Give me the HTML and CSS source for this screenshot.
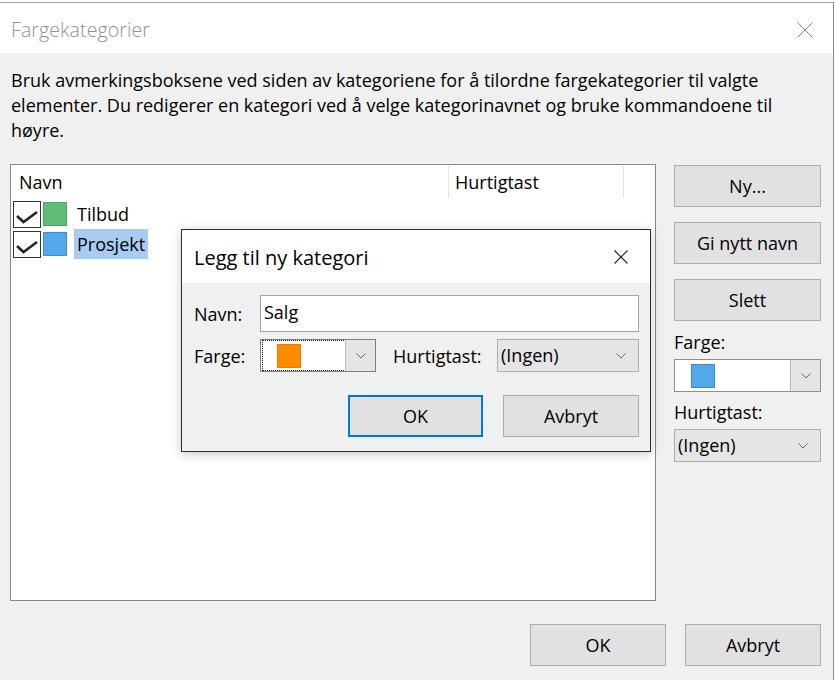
FILE: index.html
```html
<!DOCTYPE html>
<html lang="no">
<head>
<meta charset="utf-8">
<title>Fargekategorier</title>
<link rel="stylesheet" href="styles.css">
</head>
<body>
<div class="screen">
  <div class="dialog">
    <div class="titlebar">
      <span class="title">Fargekategorier</span>
      <svg class="close" width="16" height="16" viewBox="0 0 16 16"><path d="M0.5 0.5 L15.5 15.5 M15.5 0.5 L0.5 15.5" stroke="#8a8a8a" stroke-width="1" fill="none"/></svg>
    </div>
    <div class="content">
      <p class="desc">Bruk avmerkingsboksene ved siden av kategoriene for å tilordne fargekategorier til valgte<br>elementer. Du redigerer en kategori ved å velge kategorinavnet og bruke kommandoene til<br>høyre.</p>
      <div class="main">
        <div class="list">
          <div class="list-head">
            <span class="col-name">Navn</span>
            <span class="sep"></span>
            <span class="col-key">Hurtigtast</span>
            <span class="sep"></span>
          </div>
          <div class="row">
            <span class="check"><svg width="25" height="25" viewBox="0 0 25 25"><path d="M3 14 L9.5 20 L23 10" stroke="#262626" stroke-width="2.6" fill="none" stroke-linejoin="miter"/></svg></span>
            <span class="swatch green"></span>
            <span class="label">Tilbud</span>
          </div>
          <div class="row">
            <span class="check"><svg width="25" height="25" viewBox="0 0 25 25"><path d="M3 14 L9.5 20 L23 10" stroke="#262626" stroke-width="2.6" fill="none" stroke-linejoin="miter"/></svg></span>
            <span class="swatch blue"></span>
            <span class="label selected">Prosjekt</span>
          </div>
        </div>
        <div class="side">
          <div class="btn">Ny...</div>
          <div class="btn">Gi nytt navn</div>
          <div class="btn">Slett</div>
          <div class="side-label">Farge:</div>
          <div class="combo white">
            <span class="combo-value"><span class="swatch blue"></span></span>
            <span class="combo-arrow"><svg width="10" height="6" viewBox="0 0 10 6"><path d="M0.5 0.5 L5 5 L9.5 0.5" stroke="#666" stroke-width="1" fill="none"/></svg></span>
          </div>
          <div class="side-label second">Hurtigtast:</div>
          <div class="combo gray">
            <span class="combo-text">(Ingen)</span>
            <svg class="chev" width="10" height="6" viewBox="0 0 10 6"><path d="M0.5 0.5 L5 5 L9.5 0.5" stroke="#666" stroke-width="1" fill="none"/></svg>
          </div>
        </div>
      </div>
      <div class="footer">
        <div class="btn wide">OK</div>
        <div class="btn wide">Avbryt</div>
      </div>
    </div>
  </div>

  <div class="subdialog">
    <div class="sub-titlebar">
      <span class="sub-title">Legg til ny kategori</span>
      <svg class="sub-close" width="14" height="14" viewBox="0 0 14 14"><path d="M0.5 0.5 L13.5 13.5 M13.5 0.5 L0.5 13.5" stroke="#222" stroke-width="1.1" fill="none"/></svg>
    </div>
    <div class="sub-body">
      <div class="sub-row">
        <span class="sub-label">Navn:</span>
        <div class="input">Salg</div>
      </div>
      <div class="sub-row second">
        <span class="sub-label">Farge:</span>
        <div class="combo white small">
          <span class="combo-value focus"><span class="swatch orange"></span></span>
          <span class="combo-arrow"><svg width="10" height="6" viewBox="0 0 10 6"><path d="M0.5 0.5 L5 5 L9.5 0.5" stroke="#666" stroke-width="1" fill="none"/></svg></span>
        </div>
        <span class="sub-label key">Hurtigtast:</span>
        <div class="combo gray key-combo">
          <span class="combo-text">(Ingen)</span>
          <svg class="chev" width="10" height="6" viewBox="0 0 10 6"><path d="M0.5 0.5 L5 5 L9.5 0.5" stroke="#666" stroke-width="1" fill="none"/></svg>
        </div>
      </div>
      <div class="sub-buttons">
        <div class="btn sub-btn default">OK</div>
        <div class="btn sub-btn">Avbryt</div>
      </div>
    </div>
  </div>
</div>
</body>
</html>
```

FILE: styles.css
```css
* { box-sizing: border-box; }
html, body { margin: 0; padding: 0; }
body {
  width: 835px;
  height: 680px;
  overflow: hidden;
  background: #f4f4f4;
  font-family: "Open Sans", "Noto Sans", sans-serif;
  font-size: 18px;
  color: #000;
}
.screen {
  position: relative;
  width: 835px;
  height: 680px;
  padding-top: 2px;
  background: #fbfbfb;
  overflow: hidden;
}
.dialog {
  width: 834px;
  height: 700px;
  border-top: 1px solid #a6a6a6;
  border-right: 1px solid #8c8c8c;
  background: #f0f0f0;
  display: flex;
  flex-direction: column;
}
.titlebar {
  flex: none;
  height: 50px;
  background: #fff;
  display: flex;
  align-items: center;
  justify-content: space-between;
  padding: 3px 20px 0 11px;
}
.title {
  font-size: 19.5px;
  font-weight: 300;
  color: #8f8f8f;
  letter-spacing: 0.1px;
}
.close { display: block; }
.content {
  flex: 1;
  padding: 14px 12px 0 10px;
  display: flex;
  flex-direction: column;
}
.desc {
  margin: 0;
  padding-top: 1px;
  padding-left: 1px;
  font-size: 18px;
  line-height: 25px;
  white-space: nowrap;
  color: #000;
}
.main {
  display: flex;
  margin-top: 21px;
}
.list {
  width: 646px;
  height: 437px;
  border: 1px solid #828790;
  background: #fff;
}
.list-head {
  display: flex;
  height: 34px;
}
.col-name {
  width: 437px;
  padding-left: 8px;
  line-height: 34px;
}
.col-key {
  width: 174px;
  padding-left: 6px;
  line-height: 34px;
}
.sep {
  width: 1px;
  margin: 1px 0;
  background: #e3e3e3;
}
.row {
  display: flex;
  align-items: center;
  height: 30px;
  padding-left: 2px;
}
.check {
  width: 28px;
  height: 27px;
  border: 1px solid #333;
  background: #fff;
  display: flex;
}
.check svg { display: block; }
.swatch {
  display: block;
  width: 24px;
  height: 24px;
  border: 1px solid;
}
.row .swatch { margin-left: 2px; }
.green { background: #5fbd78; border-color: #48a862; }
.blue { background: #52a8e8; border-color: #3a8ed0; }
.orange { background: #ff8c00; border-color: #f07a00; }
.label {
  margin-left: 7px;
  padding: 0 3px;
  height: 30px;
  line-height: 30px;
}
.label.selected { background: #a8ccf1; }
.side {
  width: 147px;
  margin-left: 18px;
  display: flex;
  flex-direction: column;
}
.btn {
  height: 42px;
  background: #e1e1e1;
  border: 1px solid #adadad;
  display: flex;
  align-items: center;
  justify-content: center;
}
.side .btn:first-child { margin-top: 1px; }
.side .btn + .btn { margin-top: 15px; }
.side-label {
  margin-top: 9px;
  height: 24px;
  line-height: 24px;
}
.side-label.second { margin-top: 8px; }
.combo {
  margin-top: 5px;
  height: 33px;
  display: flex;
  align-items: center;
}
.combo.white {
  border: 1px solid #8f8f8f;
  background: #fff;
}
.combo.gray {
  border: 1px solid #adadad;
  background: #e5e5e5;
  padding: 0 12px 0 3px;
  justify-content: space-between;
}
.combo-value {
  flex: 1;
  height: 100%;
  display: flex;
  align-items: center;
  padding-left: 16px;
}
.combo-arrow {
  width: 30px;
  height: 100%;
  background: #e5e5e5;
  border-left: 1px solid #b5b5b5;
  display: flex;
  align-items: center;
  justify-content: center;
}
.combo-text { line-height: 31px; }
.chev { display: block; }
.footer {
  margin-top: 23px;
  display: flex;
  justify-content: flex-end;
  gap: 19px;
}
.btn.wide { width: 136px; }

/* Overlay: child dialog */
.subdialog {
  position: absolute;
  left: 181px;
  top: 229px;
  width: 470px;
  height: 223px;
  border: 1px solid #2e2e2e;
  background: #f0f0f0;
  box-shadow: 0 2px 10px rgba(0, 0, 0, 0.22);
  display: flex;
  flex-direction: column;
}
.sub-titlebar {
  flex: none;
  height: 53px;
  background: #fff;
  display: flex;
  align-items: center;
  justify-content: space-between;
  padding: 1px 22px 0 12px;
}
.sub-title { font-size: 20px; }
.sub-close { display: block; }
.sub-body {
  padding: 12px 11px 0 12px;
}
.sub-row {
  display: flex;
  align-items: center;
}
.sub-row.second { margin-top: 7px; }
.sub-label { width: 66px; }
.sub-label.key { width: 104px; margin-left: 17px; }
.input {
  flex: 1;
  height: 37px;
  border: 1px solid #a5a5a5;
  background: #fff;
  padding-left: 3px;
  line-height: 33px;
}
.sub-row .combo { margin-top: 0; }
.combo.small { width: 116px; border-color: #7d7d7d; }
.combo-value.focus {
  margin: 2px 0 2px 2px;
  height: 29px;
  outline: 1px dotted #222;
  padding-left: 14px;
}
.key-combo { width: 142px; }
.sub-buttons {
  margin-top: 23px;
  display: flex;
  justify-content: flex-end;
  gap: 20px;
}
.sub-btn { width: 136px; }
.sub-btn.default { border: 2px solid #0078d7; width: 135px; }
```
